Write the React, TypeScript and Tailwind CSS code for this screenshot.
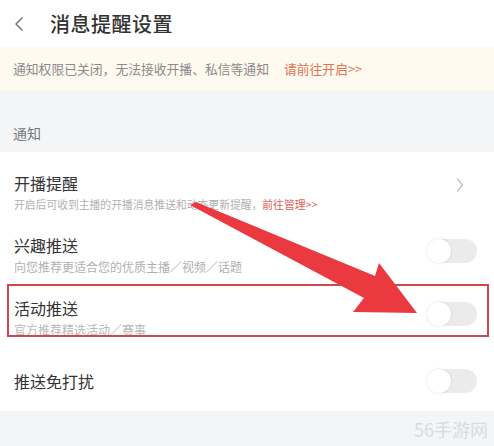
import React from 'react';

// ── 消息提醒设置 ──────────────────────────────────────────────────────────────

const font = { fontFamily: '"Noto Sans CJK SC", "Noto Sans", sans-serif' };

function Toggle({ lift = false }: { lift?: boolean }) {
  return (
    <div className={`relative w-[50px] h-[24px] rounded-full bg-[#ebebeb] shrink-0 ${lift ? 'mb-[8px]' : ''}`}>
      <div className="absolute left-0 top-0 w-[24px] h-[24px] rounded-full bg-white shadow-[0_0_3px_rgba(0,0,0,0.12)]" />
    </div>
  );
}

export default function App() {
  return (
    <div className="relative w-[494px] h-[446px] bg-[#f4f5f7] overflow-hidden flex flex-col" style={font}>

      {/* ── Header ── */}
      <header className="h-[47px] bg-white flex items-center shrink-0">
        <svg width="14" height="16" viewBox="0 0 14 16" className="ml-[12px]">
          <path d="M10 2 L4 8 L10 14" fill="none" stroke="#777" strokeWidth="1.6" strokeLinecap="round" strokeLinejoin="round" />
        </svg>
        <h1 className="ml-[24px] text-[20px] leading-[24px] font-medium text-[#333] tracking-[0.5px]">消息提醒设置</h1>
      </header>

      {/* ── Banner ── */}
      <div className="h-[44px] bg-[#fffaef] flex items-center px-[13px] shrink-0 text-[12.8px] whitespace-nowrap">
        <span className="text-[#8a8a8a]">通知权限已关闭，无法接收开播、私信等通知</span>
        <span className="ml-[15px] text-[#e2714f]">请前往开启&gt;&gt;</span>
      </div>

      {/* ── Section title ── */}
      <div className="h-[61px] flex items-end px-[13px] pb-[10px] shrink-0">
        <span className="text-[14px] leading-[18px] text-[#777]">通知</span>
      </div>

      {/* ── List ── */}
      <div className="bg-white pt-[8px] shrink-0 h-[259px]">
        <div className="h-[63px] flex items-center justify-between px-[14px]">
          <div className="flex flex-col gap-[2px]">
            <span className="text-[16px] leading-[22px] text-[#333]">开播提醒</span>
            <span className="text-[10.8px] leading-[16px] text-[#b0b0b0] whitespace-nowrap">
              开启后可收到主播的开播消息推送和动态更新提醒，<span className="text-[#e0605a]">前往管理&gt;&gt;</span>
            </span>
          </div>
          <svg width="10" height="16" viewBox="0 0 10 16" className="mr-[15px] mb-[14px]">
            <path d="M2.5 2 L7.5 8 L2.5 14" fill="none" stroke="#c4c4c4" strokeWidth="1.5" strokeLinecap="round" strokeLinejoin="round" />
          </svg>
        </div>

        <div className="h-[63px] flex items-center justify-between px-[14px]">
          <div className="flex flex-col gap-[3px]">
            <span className="text-[16px] leading-[22px] text-[#333]">兴趣推送</span>
            <span className="text-[12px] leading-[16px] text-[#b0b0b0] whitespace-nowrap">向您推荐更适合您的优质主播／视频／话题</span>
          </div>
          <div className="mr-[3px]"><Toggle lift /></div>
        </div>

        <div className="relative h-[63px] flex items-center justify-between px-[14px]">
          <div className="absolute left-[7px] right-[5px] top-[-2px] bottom-[12px] border-2 border-[#d2474e]" />
          <div className="flex flex-col gap-[3px]">
            <span className="text-[16px] leading-[22px] text-[#333]">活动推送</span>
            <span className="text-[12px] leading-[16px] text-[#b8b8b8] whitespace-nowrap">官方推荐精选活动／赛事</span>
          </div>
          <div className="mr-[3px]"><Toggle lift /></div>
        </div>

        <div className="h-[63px] flex items-center justify-between px-[14px]">
          <span className="text-[16px] leading-[22px] text-[#333]">推送免打扰</span>
          <div className="mr-[3px]"><Toggle /></div>
        </div>
      </div>

      {/* ── Footer / watermark ── */}
      <div className="flex-1 flex items-center justify-end pr-[6px]">
        <span className="text-[18px] leading-[20px] text-[#d9dbdd]">56手游网</span>
      </div>

      {/* ── Red annotation arrow ── */}
      <svg className="absolute inset-0 pointer-events-none" width="494" height="446" viewBox="0 0 494 446">
        <polygon
          points="190,205 196,202 375,276 379,263 417,313 353,312 364,298"
          fill="#ea3a40"
        />
      </svg>
    </div>
  );
}
